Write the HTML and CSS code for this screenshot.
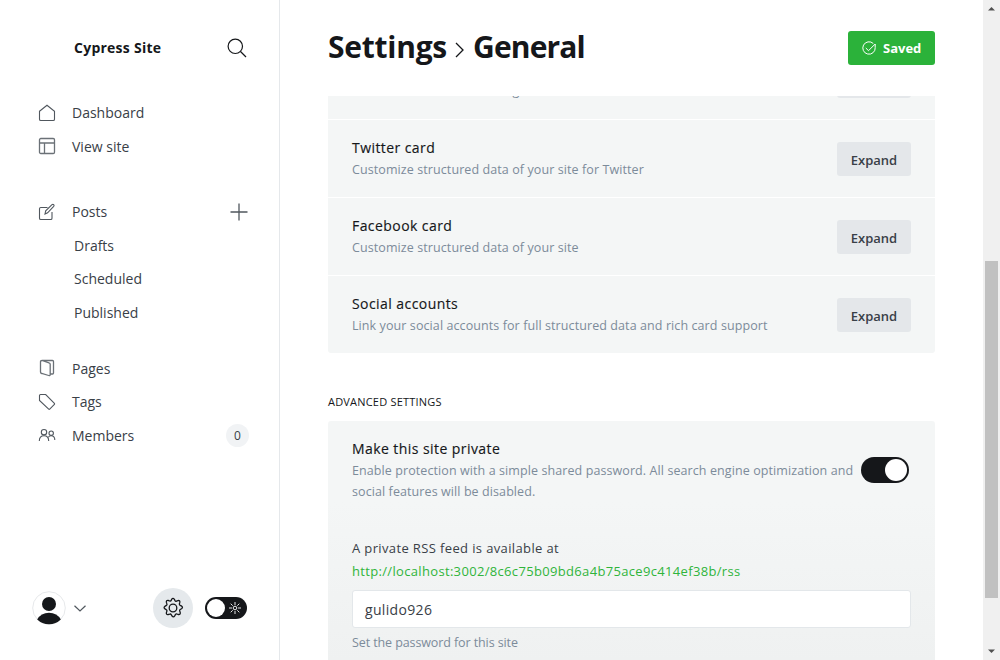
FILE: index.html
```html
<!DOCTYPE html>
<html lang="en">
<head>
<meta charset="utf-8">
<title>Settings - General - Cypress Site</title>
<link rel="stylesheet" href="styles.css">
</head>
<body>
<div class="app">
  <nav class="sidebar">
    <header class="site">
      <span class="site-name">Cypress Site</span>
      <svg class="search" viewBox="0 0 20 20"><circle cx="8.3" cy="8.3" r="7.2"/><path d="M13.5 13.5 19 19"/></svg>
    </header>
    <ul class="menu menu-top">
      <li><svg class="icon" viewBox="0 0 18 18"><path d="M1.5 7.2 9 1.2l7.500 6v8q0 1.300-1.300 1.300H2.800q-1.300 0-1.300-1.300z"/></svg><span>Dashboard</span></li>
      <li><svg class="icon gray" viewBox="0 0 18 18"><rect x="1.500" y="1.500" width="15" height="15" rx="1.300"/><path d="M1.500 6h15M6.500 6v10.500"/></svg><span>View site</span></li>
    </ul>
    <ul class="menu menu-posts">
      <li><svg class="icon" viewBox="0 0 18 18"><path d="M9.500 4.500H2.800q-1.300 0-1.300 1.300v9.400q0 1.300 1.300 1.300h9.900q1.300 0 1.300-1.300V9M7 11l.7-3.100L14 1.700q.9-.8 1.700 0t0 1.700L9.600 9.800z"/></svg><span>Posts</span><svg class="plus" viewBox="0 0 18 18"><path d="M9 .5v17M.5 9h17"/></svg></li>
      <li class="sub"><span>Drafts</span></li>
      <li class="sub"><span>Scheduled</span></li>
      <li class="sub"><span>Published</span></li>
    </ul>
    <ul class="menu menu-pages">
      <li><svg class="icon gray" viewBox="0 0 18 18"><path d="M4 1.500h10.500q1 0 1 1V14q0 1-1 1h-2.300M4 1.500q-1.500 0-1.500 1.200V13q0 1.200 1.200 1.500l7 2q1.500.4 1.500-1V5.300q0-1.200-1.200-1.500L4 1.500"/></svg><span>Pages</span></li>
      <li><svg class="icon" viewBox="0 0 18 18"><path d="M1.500 7.500v-5q0-1 1-1h5.200l8.700 8.800q.5.500 0 1l-4.700 4.800q-.5.500-1 0z"/></svg><span>Tags</span></li>
      <li><svg class="icon" viewBox="0 0 18 18"><circle cx="6" cy="6.200" r="2.700"/><path d="M1.300 15q0-5.300 4.700-5.300t4.700 5.300M10.400 11.200q.7-1.500 2.700-1.500 3.700 0 3.700 4.300"/><circle cx="13.200" cy="7.200" r="2.200"/></svg><span>Members</span><span class="badge">0</span></li>
    </ul>
    <footer class="user-bar">
      <svg class="avatar" viewBox="0 0 34 34"><circle cx="17" cy="17" r="16.300" fill="#fff" stroke="#e6e8ea"/><circle cx="17" cy="13" r="7"/><path d="M5.200 28.500q3.800-6.700 11.800-6.700t11.800 6.700Q24 33.200 17 33.200T5.200 28.500z"/></svg>
      <svg class="chevron" viewBox="0 0 12 7"><path d="m.5.700 5.500 5.300L11.500.7"/></svg>
      <span class="gear"><svg viewBox="0 0 22 22"><path d="M9.600 2.300q1.400-1.900 2.800 0l.6 1.300q.5.900 1.500.5l1.400-.5q2.300-.5 1.900 1.800l-.4 1.400q-.3 1 .7 1.500l1.200.6q2.200 1.300.2 2.800l-1.300.8q-.9.600-.5 1.500l.5 1.400q.5 2.300-1.800 2.100l-1.500-.5q-1-.3-1.500.7l-.7 1.200q-1.300 1.900-2.700.1l-.8-1.300q-.5-1-1.500-.6l-1.500.4q-2.200.3-1.800-1.900l.5-1.500q.3-1-.7-1.500l-1.200-.7q-1.900-1.400.2-2.800l1.200-.7q.9-.5.500-1.500l-.5-1.500q-.4-2.200 1.900-1.900l1.400.5q1 .4 1.500-.6z"/><circle cx="11" cy="11" r="3.800"/></svg></span>
      <span class="night"><span class="night-knob"></span><svg viewBox="0 0 12 12"><circle cx="6" cy="6" r="1.800"/><path d="M6 0v3M6 9v3M0 6h3M9 6h3M1.700 1.700l2 2M8.300 8.300l2 2M10.300 1.700l-2 2M1.700 10.300l2-2"/></svg></span>
    </footer>
  </nav>
  <main class="main">
    <header class="page-head">
      <h1><span class="crumb-section">Settings</span><svg viewBox="0 0 9 16"><path d="m1 1 7 7-7 7"/></svg><span class="crumb-page">General</span></h1>
      <button class="saved"><svg viewBox="0 0 14 14"><path d="M11.300 2.500A6.200 6.200 0 1 0 13.200 6.500V3L6.500 9.700 3.800 7"/></svg><span>Saved</span></button>
    </header>
    <div class="content">
      <section class="cards">
        <div class="row clipped"><p>Extra content for search engines</p><button class="expand">Expand</button></div>
        <div class="row"><div><h4>Twitter card</h4><p>Customize structured data of your site for Twitter</p></div><button class="expand">Expand</button></div>
        <div class="row"><div><h4>Facebook card</h4><p>Customize structured data of your site</p></div><button class="expand">Expand</button></div>
        <div class="row"><div><h4>Social accounts</h4><p>Link your social accounts for full structured data and rich card support</p></div><button class="expand">Expand</button></div>
      </section>
      <h3 class="section-title">ADVANCED SETTINGS</h3>
      <section class="private">
        <div class="private-head">
          <div><h4>Make this site private</h4><p>Enable protection with a simple shared password. All search engine optimization and<br>social features will be disabled.</p></div>
          <span class="switch"><span class="switch-knob"></span></span>
        </div>
        <p class="feed">A private RSS feed is available at</p>
        <a class="feed-link">http://localhost:3002/8c6c75b09bd6a4b75ace9c414ef38b/rss</a>
        <div class="field">gulido926</div>
        <p class="hint">Set the password for this site</p>
      </section>
    </div>
  </main>
  <div class="scrollbar"><svg viewBox="0 0 17 17"><path d="M5 10.500h7L8.500 7z"/></svg><span class="thumb"></span><svg viewBox="0 0 17 17"><path d="M5 6.500h7L8.500 10z"/></svg></div>
</div>
</body>
</html>
```
FILE: styles.css
```css
* { box-sizing: border-box; }
body { margin: 0; font-family: "Open Sans", "Noto Sans", sans-serif; color: #15171a; background: #fff; }
h1, h3, h4, p, ul { margin: 0; padding: 0; }
button { font-family: inherit; border: 0; padding: 0; }
svg { display: block; flex: none; fill: none; }
.app { display: flex; width: 1000px; height: 660px; overflow: hidden; }

.sidebar { width: 280px; flex: none; border-right: 1px solid #e5e8eb; display: flex; flex-direction: column; }
.site { display: flex; align-items: center; justify-content: space-between; height: 96px; padding: 0 32px 0 74px; }
.site-name { font-size: 14px; font-weight: 700; letter-spacing: .25px; padding-bottom: 2px; }
.search { width: 20px; height: 20px; stroke: #15171a; stroke-width: 1.2; }
.menu { list-style: none; display: flex; flex-direction: column; padding: 0 30px 0 38px; }
.menu li { display: flex; align-items: center; height: 33.5px; font-size: 14px; color: #394047; }
.menu-posts { margin-top: 32px; }
.menu-pages { margin-top: 22.5px; }
.menu .sub { padding-left: 36px; }
.icon { width: 18px; height: 18px; margin-right: 16px; stroke: #50575e; stroke-width: 1.1; }
.icon.gray { stroke: #6b7177; stroke-width: 1.3; }
.plus { width: 18px; height: 18px; margin: 0 1px 0 auto; stroke: #50575e; stroke-width: 1.3; }
.badge { margin-left: auto; width: 23px; height: 23px; border-radius: 50%; background: #f1f3f5; font-size: 12px; line-height: 23px; text-align: center; }
.user-bar { margin-top: auto; height: 104px; padding: 0 32px; display: flex; align-items: center; }
.avatar { width: 34px; height: 34px; fill: #15171a; }
.chevron { width: 12px; height: 7px; margin-left: 8px; stroke: #50575e; stroke-width: 1.2; }
.gear { width: 40px; height: 40px; border-radius: 50%; background: #e5e9ec; margin-left: 67px; display: flex; align-items: center; justify-content: center; }
.gear svg { width: 22px; height: 22px; stroke: #15171a; stroke-width: 1.3; }
.night { width: 42px; height: 22px; border-radius: 11px; background: #15171a; margin-left: 12px; padding: 0 6px 0 2px; display: flex; flex: none; align-items: center; justify-content: space-between; }
.night-knob { width: 18px; height: 18px; border-radius: 50%; background: #fff; }
.night svg { width: 12px; height: 12px; stroke: #fff; stroke-width: .9; }

.main { width: 703px; flex: none; padding: 0 48px; }
.page-head { height: 96px; display: flex; align-items: center; justify-content: space-between; }
h1 { display: flex; align-items: center; font-size: 30px; line-height: 40px; font-weight: 700; padding-bottom: 2px; }
h1 svg { width: 9px; height: 16px; margin: 5px 9px 0 8px; stroke: #15171a; stroke-width: 1.3; }
.crumb-section { letter-spacing: -.25px; }
.crumb-page { letter-spacing: -.85px; }
.saved { width: 87px; height: 34px; border-radius: 3px; background: #2bb23a; color: #fff; display: flex; align-items: center; padding-left: 14px; font-size: 13px; font-weight: 700; }
.saved svg { width: 14px; height: 14px; margin: -1px 7px 0 0; stroke: #fff; stroke-width: 1; }

.cards { display: flex; flex-direction: column; gap: 1px; border-radius: 0 0 3px 3px; overflow: hidden; }
.row { height: 77px; padding: 0 24px; background: #f4f6f6; display: flex; align-items: center; justify-content: space-between; }
.row.clipped { height: 23px; align-items: flex-end; overflow: hidden; padding-bottom: 18px; }
.row.clipped .expand { margin-bottom: 3px; }
h4 { font-size: 14px; line-height: 21px; font-weight: 500; letter-spacing: .43px; -webkit-text-stroke: .15px; }
.row h4 { line-height: 19px; padding-bottom: 2px; }
p { font-size: 12.5px; line-height: 21px; letter-spacing: .09px; color: #7c8b9a; white-space: nowrap; }
.expand { width: 74px; height: 34px; border-radius: 3px; background: #e4e7ea; color: #394047; font-size: 13px; line-height: 36px; font-weight: 600; flex: none; }
.section-title { margin: 39px 0 10px; font-size: 11px; line-height: 19px; font-weight: 400; letter-spacing: .2px; }
.private { height: 400px; padding: 17px 24px; border-radius: 3px; background: linear-gradient(#f4f6f6 0, #f4f6f6 80px, #eff1f1 240px); }
.private-head { display: flex; justify-content: space-between; height: 99px; }
.private-head > div { width: 505px; }
.private-head h4 { padding-bottom: 1px; }
.switch { width: 48px; height: 26px; margin: 19px 2px 0 0; padding: 2px; flex: none; border-radius: 13px; background: #15171a; display: flex; justify-content: flex-end; }
.switch-knob { width: 22px; height: 22px; border-radius: 50%; background: #fff; }
.feed { font-size: 13px; line-height: 22px; letter-spacing: .37px; color: #394047; }
.feed-link { display: block; width: max-content; margin-top: 1px; font-size: 13px; line-height: 22px; letter-spacing: .33px; color: #30b43b; }
.field { height: 38px; margin-top: 8px; padding: 0 12px; border: 1px solid #e3e7ea; border-radius: 3px; background: #fff; font-size: 14px; line-height: 37px; letter-spacing: .33px; color: #394047; }
.hint { margin-top: 4px; letter-spacing: -.1px; }

.scrollbar { width: 17px; flex: none; background: #f0f0f0; display: flex; flex-direction: column; justify-content: space-between; }
.scrollbar svg { width: 17px; height: 17px; fill: #505050; }
.thumb { width: 13px; height: 337px; margin: 199px 0 0 2px; background: #c1c1c1; }
```
